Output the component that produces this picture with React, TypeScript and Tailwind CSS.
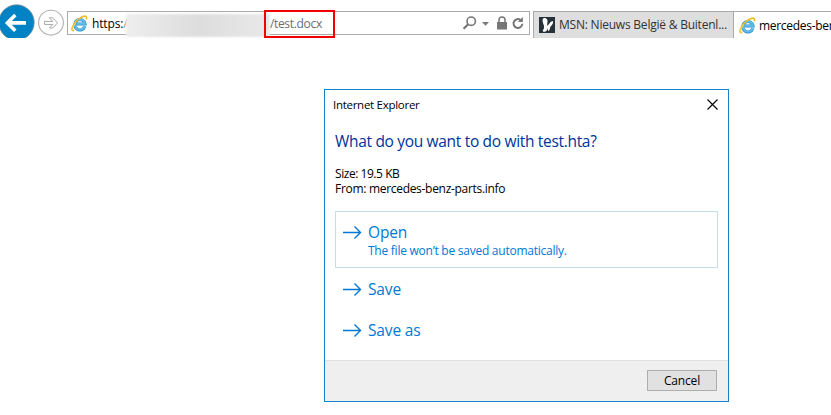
import type { ReactNode } from 'react';

function IELogo() {
  return (
    <svg width="17" height="17" viewBox="0 0 17 17" className="shrink-0">
      <path d="M13.9 11.3A5.2 5.2 0 1 1 14.1 9H5.6" fill="none" stroke="#2f91cd" strokeWidth="3.1" />
      <path d="M13.8 11.1A5.1 5.1 0 1 1 14 8.8H5.8" fill="none" stroke="#62bdea" strokeWidth="2" />
      <path d="M3.2 15.5C-.4 16.5.6 11.7 4.4 7.2 8.3 2.6 14 0 15.3 1.7c.5.8.3 1.7-.2 2.7" fill="none" stroke="#f0bd27" strokeWidth="1.6" />
      <path d="M3 15.3C.7 15.4 1.8 11.4 5 7.3" fill="none" stroke="#ffdc58" strokeWidth=".7" />
    </svg>
  );
}

function Arrow() {
  return (
    <svg width="19" height="14" viewBox="0 0 19 14" className="shrink-0" fill="none" stroke="#0078d7" strokeWidth="1.4">
      <path d="M0 6.5H17.4M11.5.5l6 6-6 6" />
    </svg>
  );
}

function Option({ label, children, className }: { label: string; children?: ReactNode; className: string }) {
  return (
    <button className={`flex w-[383px] items-start border pl-[7px] text-left text-[#0078d7] ${className}`}>
      <span className="mt-[14px] flex"><Arrow /></span>
      <span className="ml-[6px] mt-[10px] flex flex-col whitespace-nowrap">
        <span className="text-[15.5px] leading-[20px] tracking-[-0.15px]">{label}</span>
        {children}
      </span>
    </button>
  );
}

export default function App() {
  return (
    <div className="h-[415px] w-[831px] overflow-hidden bg-white font-['Open_Sans','Noto_Sans',sans-serif] text-[12px] text-black">
      <header className="flex h-[38px] overflow-hidden whitespace-nowrap">
        <svg width="67" height="38" viewBox="0 0 67 38" className="shrink-0">
          <circle cx="16.5" cy="22.5" r="17.7" fill="#0083c5" stroke="#7c8e97" strokeWidth=".8" />
          <path d="M26 22.9H8M15.3 15 7.4 22.9l7.9 7.9" fill="none" stroke="#fff" strokeWidth="3.6" />
          <circle cx="51" cy="22.7" r="12.4" fill="#fff" stroke="#b2b2b2" strokeWidth="1.1" />
          <path d="M44.5 21.4h8.3l-3.4-3.6h3.2l5 5.1-5 5.1h-3.2l3.4-3.6h-8.3z" fill="#fff" stroke="#a7a7a7" />
        </svg>
        <div className="mt-[11px] flex h-[24px] w-[463px] shrink-0 items-center border border-[#ababab] pl-[3px]">
          <IELogo />
          <span className="ml-[4px] mt-[2px] w-[33px] tracking-[-0.15px]">https:<span className="text-[#888]">/</span></span>
          <div className="relative h-[23px] w-[147px]">
            <div className="absolute left-[1px] top-[2px] h-[23px] w-[144px] bg-gradient-to-r from-[#eeeeee] via-[#dddddd] to-[#e9e9e9] blur-[1px]" />
          </div>
          <div className="relative mt-[2px] w-[70px] text-[#6c6c6c]">
            <span className="relative ml-[-2px] tracking-[-0.5px]">/<span className="tracking-[-0.3px]">test.docx</span></span>
            <div className="absolute left-[-8px] top-[-5px] h-[28px] w-[71px] border-2 border-[#f20000]" />
          </div>
          <svg width="64" height="18" viewBox="0 0 64 18" className="ml-auto mr-[3px] shrink-0" fill="none" stroke="#777">
            <circle cx="9.2" cy="7.2" r="4.2" strokeWidth="1.6" />
            <path d="m6.2 10.2-4.6 4.5" strokeWidth="2.3" />
            <path d="M20 8h7l-3.5 3.7z" fill="#777" stroke="none" />
            <path d="M35 8h10v7.5H35z" fill="#777" stroke="none" />
            <path d="M37 8.5V6a3 3 0 0 1 6 0v2.5" strokeWidth="1.5" />
            <path d="M60.3 9.8a4.4 4.4 0 1 1-1.7-3.8" strokeWidth="2" />
            <path d="M60.8 2.9v5h-5z" fill="#777" stroke="none" />
          </svg>
        </div>
        <div className="ml-[3px] mt-[11px] flex h-[27px] w-[201px] shrink-0 items-center border-x border-t border-[#aaa] bg-[#dedede] pl-[5px] text-[#333]">
          <svg width="16" height="16" viewBox="0 0 16 16" className="shrink-0">
            <path d="M0 0h16v16H0z" fill="#263138" />
            <path d="M4 1.4C5.3.4 7.4.9 8.2 2.5c1 2-.5 4.3.1 6.3 1-.8 1.7-2.1 2.7-3.1.9-.9 2.1-1.6 3.1-1.3.3 1.7-.9 3.3-2.3 4.8-.9 1-.5 2.5-1.6 4-.5.7-1 .8-1.3.2-.3-.7-.1-1.7-.2-2.4-.5 1.4-.8 3.1-2.3 3.6-1.1.4-2.3.1-2.7-.7.7-1.5 1.7-3 1.3-5C4.5 6.6 2.8 3.5 4 1.4z" fill="#fff" />
          </svg>
          <span className="ml-[4px] tracking-[-0.22px]">MSN: Nieuws België &amp; Buitenl...</span>
        </div>
        <div className="mt-[11px] flex h-[27px] w-[97px] shrink-0 items-center overflow-hidden border-t border-[#ababab] pl-[5px]">
          <IELogo />
          <span className="ml-[3px] mt-[1px] tracking-[-0.3px]">mercedes-ben</span>
        </div>
      </header>
      <main className="ml-[324px] mt-[51px] flex h-[313px] w-[405px] flex-col border border-[#1583cb]">
        <div className="flex h-[29px] items-center justify-between pl-[8px] pr-[10px]">
          <span className="text-[11.5px] tracking-[-0.28px]">Internet Explorer</span>
          <svg width="11" height="11" viewBox="0 0 11 11" className="mb-[1px]"><path d="m.5.5 10 10m0-10-10 10" stroke="#000" strokeWidth="1.1" /></svg>
        </div>
        <section className="flex h-[241px] shrink-0 flex-col px-[10px] whitespace-nowrap">
          <h1 className="mt-[12px] text-[15.5px] leading-[20px] tracking-[-0.32px] text-[#003399]">What do you want to do with test.hta?</h1>
          <div className="mt-[15px] text-[12px] leading-[15px] tracking-[-0.3px]"><p className="tracking-[-0.45px]">Size: 19.5 KB</p><p>From: mercedes-benz-parts.info</p></div>
          <Option label="Open" className="mt-[15px] h-[57px] border-[#c5deed]">
            <span className="mt-[1px] text-[12px] leading-[16px] tracking-[-0.25px]">The file won’t be saved automatically.</span>
          </Option>
          <Option label="Save" className="h-[41px] border-transparent" />
          <Option label="Save as" className="h-[41px] border-transparent" />
        </section>
        <footer className="flex flex-1 items-start justify-end border-t border-[#dfdfdf] bg-[#efefef] pr-[11px] pt-[9px]">
          <button className="h-[21px] w-[70px] border border-[#adadad] bg-[#e1e1e1] text-[12px] leading-[18px] tracking-[-0.15px]">Cancel</button>
        </footer>
      </main>
    </div>
  );
}
